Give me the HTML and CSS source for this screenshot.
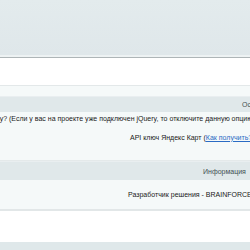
FILE: index.html
```html
<!DOCTYPE html>
<html lang="ru">
<head>
    <meta charset="UTF-8">
    <title>Настройки модуля</title>
    <link rel="stylesheet" href="styles.css">
</head>
<body>
    <div class="topbar"></div>
    <div class="panel">
        <div class="tabs-gap"></div>
        <table class="edit-table">
            <tr class="spacer"><td></td></tr>
            <tr class="heading main"><td class="h-main">Основные настройки</td></tr>
            <tr class="field check"><td class="l-jquery">Подключить jQuery? (Если у вас на проекте уже подключен jQuery, то отключите данную опцию)</td></tr>
            <tr class="field input"><td class="l-api">API ключ Яндекс Карт (<a href="#">Как получить?</a>)</td></tr>
            <tr class="field last"><td></td></tr>
            <tr class="heading"><td class="h-info">Информация</td></tr>
            <tr class="field info"><td class="l-dev">Разработчик решения - BRAINFORCE</td></tr>
        </table>
    </div>
    <div class="footer"></div>
</body>
</html>
```

FILE: styles.css
```css
body {
    margin: 0;
    width: 250px;
    overflow: hidden;
    background-color: #dfe8ea;
    font-family: "Liberation Sans", Arial, sans-serif;
    font-size: 7px;
    color: #1a1a1a;
}

.topbar {
    height: 55px;
    background: linear-gradient(to bottom, #e3ebed, #dfe7ea);
    border-bottom: 2px solid #edf2f3;
    box-shadow: 0 1px 0 #aeb5b7;
    margin-bottom: 1px;
}

.panel {
    background-color: #fff;
    height: 184px;
}

.tabs-gap {
    height: 27px;
}

.edit-table {
    width: 100%;
    border-spacing: 0;
    border-top: 1px solid #e3e8e9;
}

.edit-table td {
    padding: 0;
    white-space: nowrap;
    overflow: hidden;
    max-width: 250px;
}

.spacer td {
    height: 10px;
    background-color: #f5f9f9;
}

.heading td {
    background-color: #e0e8ea;
    color: #3f4f52;
    height: 18px;
    border-top: 1px solid #e9eef0;
}

.heading.main td {
    height: 15px;
}

.h-main { padding-left: 242px !important; }
.h-info { padding-left: 203px !important; }

.field td {
    background-color: #f5f9f9;
}

.field.check td {
    height: 13px;
}

.field.input td {
    height: 24px;
}

.field.last td {
    height: 11px;
    border-bottom: 1px solid #e4e9ea;
}

.field.info td {
    height: 29px;
    border-bottom: 2px solid #e2e7e8;
}

.l-jquery { text-indent: -59px; }
.l-api { padding-left: 130px !important; }
.l-dev { padding-left: 128px !important; }

a {
    color: #2a6bc4;
}

.footer {
    height: 8px;
}
```
